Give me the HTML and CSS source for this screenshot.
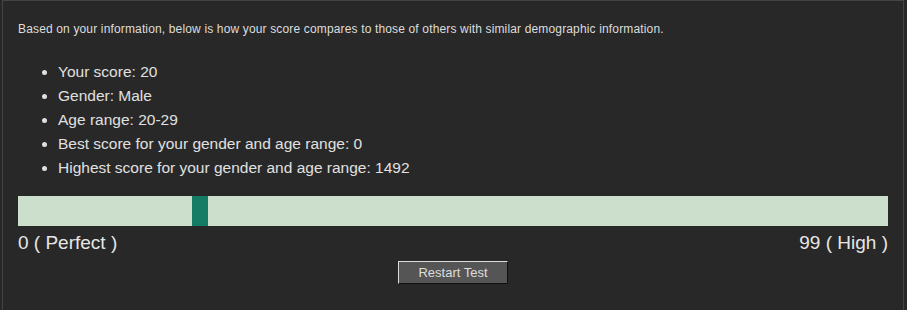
FILE: index.html
```html
<!DOCTYPE html>
<html>
<head>
  <meta charset="UTF-8">
  <title>Your Results</title>
  <link rel="stylesheet" href="styles.css">
</head>
<body>
  <div class="panel">
    <p class="intro">Based on your information, below is how your score compares to those of others with similar demographic information.</p>

    <ul class="stats">
      <li>Your score: 20</li>
      <li>Gender: Male</li>
      <li>Age range: 20-29</li>
      <li>Best score for your gender and age range: 0</li>
      <li>Highest score for your gender and age range: 1492</li>
    </ul>

    <div class="scale">
      <div class="marker" style="margin-left: 174px"></div>
    </div>
    <div class="scale-labels">
      <span>0 ( Perfect )</span>
      <span>99 ( High )</span>
    </div>

    <div class="actions">
      <button type="button">Restart Test</button>
    </div>
  </div>
</body>
</html>
```

FILE: styles.css
```css
body {
  margin: 0;
  background-color: #282828;
  font-family: 'Liberation Sans', Arial, sans-serif;
  color: #e0e0e0;
}
.panel {
  margin-left: 2px;
  width: 902px;
  height: 320px;
  border: 1px solid #444444;
  border-bottom: none;
  box-sizing: border-box;
  padding: 0 15px;
}
.intro {
  margin: 0;
  padding-top: 21px;
  font-size: 12px;
  line-height: 14px;
  letter-spacing: 0.15px;
  color: #dddddd;
}
.stats {
  margin: 24px 0 0 0;
  padding-left: 40px;
  font-size: 15.5px;
  line-height: 24px;
}
.scale {
  margin-top: 16px;
  height: 30px;
  background-color: #ccdecc;
  display: flex;
}
.marker {
  width: 16px;
  background-color: #147c64;
}
.scale-labels {
  display: flex;
  justify-content: space-between;
  font-size: 19px;
  line-height: 22px;
  margin-top: 6px;
  color: #e6e6e6;
}
.actions {
  display: flex;
  justify-content: center;
  margin-top: 7px;
}
button {
  width: 110px;
  height: 23px;
  padding: 0;
  background-color: #555555;
  color: #dddddd;
  font-family: 'Liberation Sans', Arial, sans-serif;
  font-size: 13px;
  border: 1px solid;
  border-color: #dddddd #111111 #111111 #dddddd;
}
```
